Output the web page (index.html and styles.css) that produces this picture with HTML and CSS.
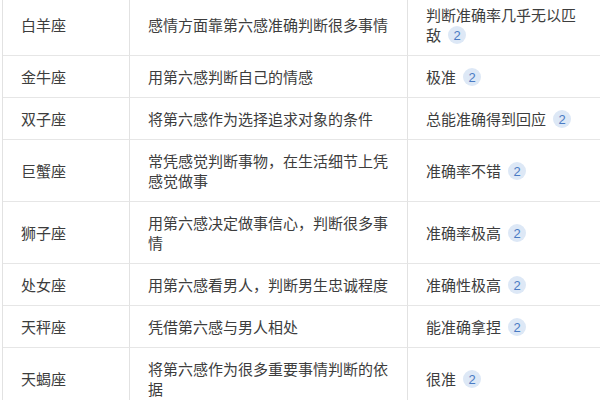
FILE: index.html
```html
<!DOCTYPE html>
<html lang="zh">
<head>
<meta charset="utf-8">
<link rel="stylesheet" href="styles.css">
</head>
<body>
<div class="table">
  <div class="cell c1">白羊座</div>
  <div class="cell c2">感情方面靠第六感准确判断很多事情</div>
  <div class="cell c3"><span>判断准确率几乎无以匹敌<span class="badge">2</span></span></div>

  <div class="cell c1">金牛座</div>
  <div class="cell c2">用第六感判断自己的情感</div>
  <div class="cell c3"><span>极准<span class="badge">2</span></span></div>

  <div class="cell c1">双子座</div>
  <div class="cell c2">将第六感作为选择追求对象的条件</div>
  <div class="cell c3"><span>总能准确得到回应<span class="badge">2</span></span></div>

  <div class="cell c1">巨蟹座</div>
  <div class="cell c2">常凭感觉判断事物，在生活细节上凭感觉做事</div>
  <div class="cell c3"><span>准确率不错<span class="badge">2</span></span></div>

  <div class="cell c1">狮子座</div>
  <div class="cell c2">用第六感决定做事信心，判断很多事情</div>
  <div class="cell c3"><span>准确率极高<span class="badge">2</span></span></div>

  <div class="cell c1">处女座</div>
  <div class="cell c2">用第六感看男人，判断男生忠诚程度</div>
  <div class="cell c3"><span>准确性极高<span class="badge">2</span></span></div>

  <div class="cell c1">天秤座</div>
  <div class="cell c2">凭借第六感与男人相处</div>
  <div class="cell c3"><span>能准确拿捏<span class="badge">2</span></span></div>

  <div class="cell c1">天蝎座</div>
  <div class="cell c2">将第六感作为很多重要事情判断的依据</div>
  <div class="cell c3"><span>很准<span class="badge">2</span></span></div>
</div>
</body>
</html>
```

FILE: styles.css
```css
html, body {
  margin: 0;
  padding: 0;
  background: #ffffff;
  overflow: hidden;
}

body {
  font-family: "Noto Sans CJK SC", "Noto Sans", sans-serif;
  font-size: 15px;
  color: #3d3d3d;
}

.table {
  display: grid;
  grid-template-columns: 127px 278px 200px;
  width: 606px;
  margin: -6px 0 0 2px;
  border-left: 1px solid #e2e2e2;
}

.cell {
  box-sizing: border-box;
  display: flex;
  align-items: center;
  padding: 10.5px 18px;
  line-height: 20px;
  border-right: 1px solid #e2e2e2;
  border-bottom: 1px solid #e6e6e6;
}

.cell span {
  line-height: 20px;
}

.c3 {
  padding-right: 23px;
}

.badge {
  display: inline-block;
  box-sizing: border-box;
  width: 18px;
  height: 18px;
  margin: 1px 0 0 7px;
  border-radius: 50%;
  background: #dde8f6;
  color: #4a7bc4;
  font-family: "Liberation Sans", "Noto Sans", sans-serif;
  font-size: 13px;
  line-height: 18px;
  text-align: center;
  vertical-align: top;
}
```
